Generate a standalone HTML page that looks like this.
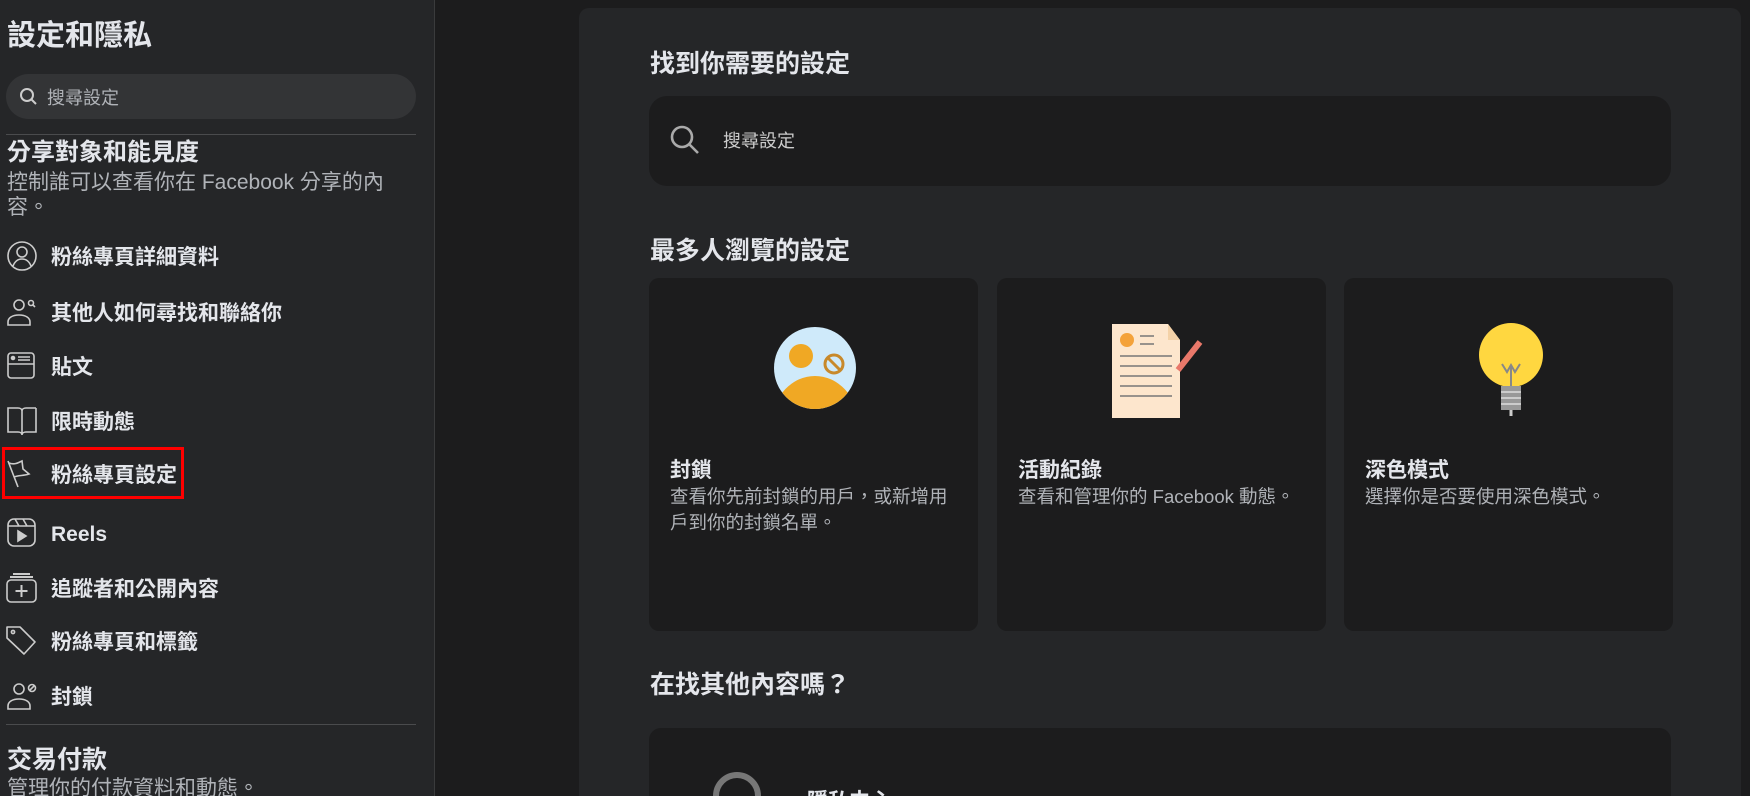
<!DOCTYPE html>
<html><head><meta charset="utf-8"><style>
*{margin:0;padding:0;box-sizing:border-box}
html,body{width:1750px;height:796px;overflow:hidden;background:#1c1c1d}
body{font-family:"Liberation Sans","Noto Sans CJK TC",sans-serif;color:#e4e6eb}
#w{position:relative;width:1750px;height:796px;overflow:hidden;background:#1c1c1d}
.side{position:absolute;left:0;top:0;width:435px;height:796px;background:#252628;border-right:1px solid #3a3b3c}
.abs{position:absolute}
.title{left:7px;top:18px;font-size:29px;font-weight:bold;line-height:36px}
.sbar{left:6px;top:74px;width:410px;height:45px;border-radius:23px;background:#333436}
.sbar span{position:absolute;left:41px;top:12px;font-size:18px;color:#b0b3b8;line-height:24px}
.hr{left:6px;width:410px;height:1px;background:#4a4b4d}
.h2{left:7px;font-size:24px;font-weight:bold;line-height:30px}
.desc{left:7px;font-size:21px;color:#b0b3b8;line-height:25px;white-space:nowrap}
.item{left:0;height:40px;width:430px}
.item svg{position:absolute;left:6px;top:5px}
.item span{position:absolute;left:51px;top:9px;font-size:21px;font-weight:bold;line-height:28px}
.panel{left:579px;top:8px;width:1162px;height:788px;background:#252628;border-radius:10px 10px 0 0}
.ht{left:650px;font-size:25px;font-weight:bold;line-height:30px}
.card{background:#1c1c1d;border-radius:10px;width:329px;height:353px;top:278px}
.card b{position:absolute;left:21px;top:179px;font-size:21px;line-height:28px}
.card p{position:absolute;left:21px;top:206px;width:290px;font-size:18.5px;color:#b0b3b8;line-height:26px}
</style></head><body><div id="w">
<div class="side">
<div class="abs title">設定和隱私</div>
<div class="abs sbar"><svg class="abs" style="left:13px;top:13px" width="20" height="20" viewBox="0 0 20 20"><circle cx="8" cy="8" r="6" fill="none" stroke="#ccc" stroke-width="2"/><path d="M12.5 12.5L17 17" stroke="#ccc" stroke-width="2"/></svg><span>搜尋設定</span></div>
<div class="abs hr" style="top:134px"></div>
<div class="abs h2" style="top:138px">分享對象和能見度</div>
<div class="abs desc" style="top:170px">控制誰可以查看你在 Facebook 分享的內<br>容。</div>

<div class="abs item" style="top:235px"><svg width="32" height="32" viewBox="0 0 32 32" fill="none" stroke="#ccc" stroke-width="1.6"><circle cx="16" cy="16" r="14"/><circle cx="16" cy="12" r="5"/><path d="M7 26c2-5 5-7 9-7s7 2 9 7"/></svg><span>粉絲專頁詳細資料</span></div>
<div class="abs item" style="top:291px"><svg width="32" height="32" viewBox="0 0 32 32" fill="none" stroke="#ccc" stroke-width="1.6"><circle cx="13" cy="9" r="5"/><path d="M2 29v-3c0-4 4-7 11-7s11 3 11 7v3z"/><circle cx="25" cy="7" r="2.5"/><path d="M27 9l2 2"/></svg><span>其他人如何尋找和聯絡你</span></div>
<div class="abs item" style="top:345px"><svg width="32" height="32" viewBox="0 0 32 32" fill="none" stroke="#ccc" stroke-width="1.6"><rect x="2" y="3" width="26" height="25" rx="3"/><path d="M2 14h26M12 7h12M12 10h12"/><circle cx="7" cy="8" r="1.5" fill="#ccc"/></svg><span>貼文</span></div>
<div class="abs item" style="top:400px"><svg width="32" height="32" viewBox="0 0 32 32" fill="none" stroke="#ccc" stroke-width="1.6"><path d="M2 3h10c2 0 4 1 4 3v24c0-2-2-3-4-3H2zM30 3H20c-2 0-4 1-4 3M30 3v24H20c-2 0-4 1-4 3"/></svg><span>限時動態</span></div>
<div class="abs item" style="top:453px"><svg width="32" height="32" viewBox="0 0 32 32" fill="none" stroke="#ccc" stroke-width="1.6"><path d="M2 3l10 26M3 5c5 2 9 0 13-2l1 8 6 5c-6 2-10 1-15 3"/></svg><span>粉絲專頁設定</span></div>
<div class="abs" style="left:2px;top:447px;width:182px;height:52px;border:3px solid #f00"></div>
<div class="abs item" style="top:512px"><svg width="32" height="32" viewBox="0 0 32 32" fill="none" stroke="#ccc" stroke-width="1.6"><rect x="2" y="2" width="27" height="27" rx="6"/><path d="M2 9h27M9 2l4 7M17 2l4 7"/><path d="M12 14v10l8-5z" fill="#ccc"/></svg><span>Reels</span></div>
<div class="abs item" style="top:567px"><svg width="32" height="32" viewBox="0 0 32 32" fill="none" stroke="#ccc" stroke-width="1.6"><rect x="1" y="8" width="29" height="22" rx="4"/><path d="M4 5h23M7 2h17M15.5 13v12M9.5 19h12" stroke-width="2"/></svg><span>追蹤者和公開內容</span></div>
<div class="abs item" style="top:620px"><svg width="32" height="32" viewBox="0 0 32 32" fill="none" stroke="#ccc" stroke-width="1.6"><path d="M1 2h13l15 15-11 12L1 13z" stroke-linejoin="round"/><circle cx="7" cy="7" r="1.6"/></svg><span>粉絲專頁和標籤</span></div>
<div class="abs item" style="top:675px"><svg width="32" height="32" viewBox="0 0 32 32" fill="none" stroke="#ccc" stroke-width="1.6"><circle cx="13" cy="9" r="5"/><path d="M2 29v-3c0-4 4-7 11-7s11 3 11 7v3z"/><circle cx="26" cy="8" r="3.5"/><path d="M24 10l4-4"/></svg><span>封鎖</span></div>
<div class="abs hr" style="top:724px"></div>
<div class="abs h2" style="top:745px;font-size:25px">交易付款</div>
<div class="abs desc" style="top:776px">管理你的付款資料和動態。</div>
</div>

<div class="abs panel"></div>
<div class="abs ht" style="top:49px">找到你需要的設定</div>
<div class="abs" style="left:649px;top:96px;width:1022px;height:90px;background:#1c1c1d;border-radius:18px">
<svg class="abs" style="left:20px;top:28px" width="32" height="32" viewBox="0 0 32 32" fill="none" stroke="#aaa" stroke-width="2.6"><circle cx="13" cy="13" r="10"/><path d="M20.5 20.5L29 29"/></svg>
<span class="abs" style="left:74px;top:33px;font-size:18px;color:#ccc;line-height:24px">搜尋設定</span></div>
<div class="abs ht" style="top:236px">最多人瀏覽的設定</div>

<div class="abs card" style="left:649px">
<svg class="abs" style="left:124px;top:48px" width="84" height="84" viewBox="0 0 84 84"><clipPath id="c"><circle cx="42" cy="42" r="41"/></clipPath><circle cx="42" cy="42" r="41" fill="#cfeafa"/><g clip-path="url(#c)"><ellipse cx="42" cy="95" rx="42" ry="45" fill="#f0a824"/></g><circle cx="28" cy="30" r="12" fill="#f0a824"/><circle cx="61" cy="38" r="9" fill="none" stroke="#c8892a" stroke-width="3"/><path d="M55 32l12 12" stroke="#c8892a" stroke-width="3"/></svg>
<b>封鎖</b><p>查看你先前封鎖的用戶，或新增用戶到你的封鎖名單。</p></div>
<div class="abs card" style="left:997px">
<svg class="abs" style="left:115px;top:46px" width="100" height="94" viewBox="0 0 100 94"><path d="M0 0h56l12 16v78H0z" fill="#fde6cd"/><path d="M56 0l12 16H56z" fill="#f4d2a8"/><circle cx="15" cy="16" r="7" fill="#f4a23a"/><path d="M28 12h14M28 20h14M8 32h52M8 42h52M8 52h52M8 62h52M8 72h52" stroke="#777" stroke-width="1.6"/><path d="M66 46l22-28" stroke="#e9786a" stroke-width="6"/></svg>
<b>活動紀錄</b><p>查看和管理你的 Facebook 動態。</p></div>
<div class="abs card" style="left:1344px">
<svg class="abs" style="left:132px;top:44px" width="70" height="96" viewBox="0 0 70 96"><ellipse cx="35" cy="33" rx="32" ry="32" fill="#ffd740"/><path d="M26 42l5 8 4-7 4 7 5-8M35 45v20" stroke="#888" stroke-width="2" fill="none"/><rect x="25" y="64" width="20" height="24" fill="#999"/><path d="M25 70h20M25 76h20M25 82h20" stroke="#ccc" stroke-width="2"/><path d="M35 88v6" stroke="#ccc" stroke-width="3"/></svg>
<b>深色模式</b><p>選擇你是否要使用深色模式。</p></div>

<div class="abs ht" style="top:670px">在找其他內容嗎？</div>
<div class="abs" style="left:649px;top:728px;width:1022px;height:100px;background:#1c1c1d;border-radius:12px">
<div class="abs" style="left:64px;top:44px;width:48px;height:48px;border:6px solid #777;border-radius:50%"></div>
<span class="abs" style="left:158px;top:60px;font-size:21px;font-weight:bold;line-height:28px">隱私中心</span></div>
</div></body></html>
